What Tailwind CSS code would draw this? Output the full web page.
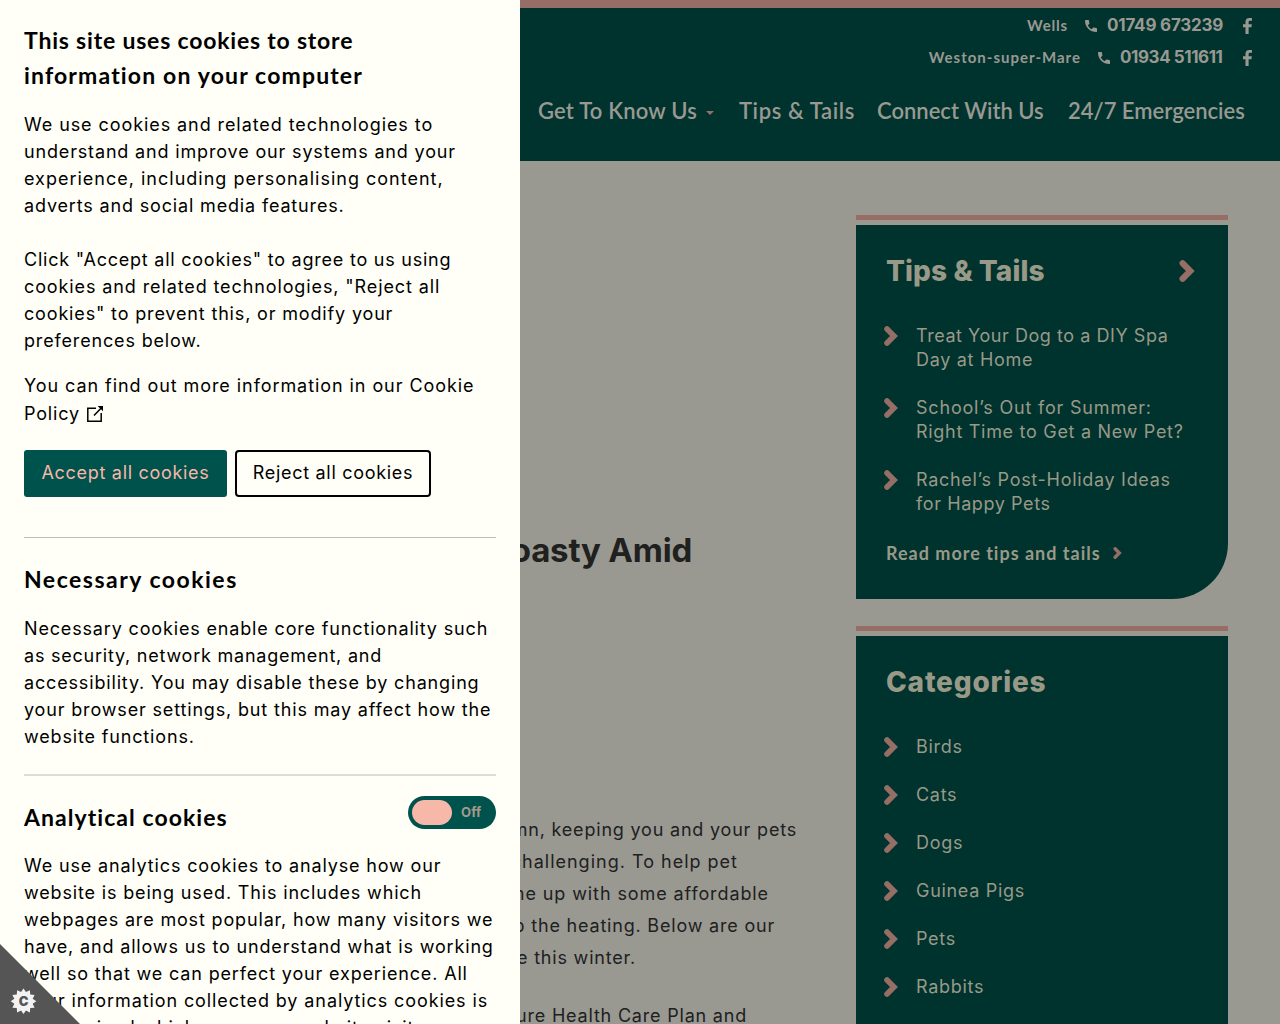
<!DOCTYPE html>
<html lang="en">
<head>
<meta charset="utf-8">
<title>Tips &amp; Tails</title>
<script src="https://cdn.jsdelivr.net/npm/@tailwindcss/browser@4"></script>
</head>
<body class="bg-[#999992]">
<svg class="hidden">
  <symbol id="chev" viewBox="0 0 14 20"><path d="M3 3L10 10L3 17" fill="none" stroke="#966e66" stroke-width="5.6" stroke-linecap="round" stroke-linejoin="miter"/></symbol>
  <symbol id="phone" viewBox="0 0 12 12"><path d="M0.6 0H3.3Q4 0 4 .7Q4 2 4.4 3.2Q4.5 3.7 4.2 4L2.7 5.3Q4 8 6.7 9.3L8 7.8Q8.3 7.5 8.8 7.6Q10 8 11.3 8Q12 8 12 8.7V11.4Q12 12 11.3 12Q6.7 12 3.3 8.7Q0 5.3 0 .7Q0 0 .6 0Z" fill="#999992"/></symbol>
  <symbol id="fb" viewBox="0 0 9 16"><path d="M2.5 16V9.3H0V6.3H2.5V4Q2.5 0 6.3 0H9V2.8H7Q5.6 2.8 5.6 4.2V6.3H8.8L8.4 9.3H5.6V16Z" fill="#999992"/></symbol>
</svg>
<div class="relative h-[1024px] w-[1280px] overflow-hidden font-['Inter',sans-serif] text-[18px]">
  <header class="flex h-[161px] flex-col items-end border-t-8 border-[#966e66] bg-[#00332e] pt-[2px] font-['Lato',sans-serif] font-bold text-[#999992]">
    <div class="flex h-8 items-center pr-7 text-[15px]">
      <span class="-mt-px tracking-[0.8px]">Wells</span>
      <svg class="ml-[17px] size-3"><use href="#phone"/></svg>
      <span class="ml-[10px] w-[117px] whitespace-nowrap font-['Inter',sans-serif] text-[17px] tracking-[-0.2px]">01749 673239</span>
      <svg class="ml-[19px] h-4 w-[9px]"><use href="#fb"/></svg>
    </div>
    <div class="flex h-8 items-center pr-7 text-[15px]">
      <span class="-mt-px tracking-[1px]">Weston-super-Mare</span>
      <svg class="ml-[17px] size-3"><use href="#phone"/></svg>
      <span class="ml-[10px] w-[104px] whitespace-nowrap font-['Inter',sans-serif] text-[17px] tracking-[-0.42px]">01934 511611</span>
      <svg class="ml-[19px] h-4 w-[9px]"><use href="#fb"/></svg>
    </div>
    <nav class="mt-[19px] flex h-[34px] w-[742px] items-center whitespace-nowrap text-[22px] font-semibold">
      <a class="w-[168px] tracking-[0.2px]">Get To Know Us</a>
      <svg class="mt-[5px] h-1 w-2" viewBox="0 0 8 4"><path d="M0 0H8L4 4Z" fill="#966e66"/></svg>
      <a class="ml-[25px] w-[138px] tracking-[0.6px]">Tips &amp; Tails</a>
      <a class="w-[191px]">Connect With Us</a>
      <a>24/7 Emergencies</a>
    </nav>
  </header>

  <div class="flex">
    <main class="flex w-[856px] flex-col items-start whitespace-nowrap text-[18px] leading-8 tracking-[0.8px] text-[#20201e]">
      <h1 class="mt-[364px] w-[692px] text-right text-[33px] leading-[50px] font-bold tracking-[-0.2px]">Toasty Amid</h1>
      <div class="mt-[239px] flex flex-col text-right">
        <p class="w-[797px]">autumn, keeping you and your pets</p>
        <p class="w-[738px] tracking-[1px]">challenging. To help pet</p>
        <p class="w-[769px] tracking-[0.9px]">come up with some affordable</p>
        <p class="w-[775px]">up the heating. Below are our</p>
        <p class="w-[636px]">active this winter.</p>
        <p class="mt-[26px] w-[747px]">Pure Health Care Plan and</p>
      </div>
    </main>

    <aside class="w-[372px] pt-[54px] leading-6 tracking-[0.7px] text-[#999988]">
      <div class="h-[5px] bg-[#966e66]"></div>
      <section class="mt-[5px] h-[374.400px] rounded-br-[56px] bg-[#00332e] pt-7">
        <div class="flex items-center justify-between pr-[33px] pl-[30px]">
          <h2 class="text-[28px] leading-9 font-extrabold tracking-[0.1px]">Tips &amp; Tails</h2>
          <svg class="h-[22px] w-4"><use href="#chev"/></svg>
        </div>
        <ul class="mt-[35px] flex flex-col gap-6 pl-7">
          <li class="flex gap-[18px]"><svg class="mt-[2px] h-5 w-[14px]"><use href="#chev"/></svg><span><span class="tracking-[0.55px]">Treat Your Dog to a DIY Spa</span><br>Day at Home</span></li>
          <li class="flex gap-[18px]"><svg class="mt-[2px] h-5 w-[14px]"><use href="#chev"/></svg><span><span class="tracking-[0.8px]">School’s Out for Summer:</span><br>Right Time to Get a New Pet?</span></li>
          <li class="flex gap-[18px]"><svg class="mt-[2px] h-5 w-[14px]"><use href="#chev"/></svg><span>Rachel’s Post-Holiday Ideas<br><span class="tracking-[0.6px]">for Happy Pets</span></span></li>
        </ul>
        <a class="mt-[25px] flex items-center pl-[30px] font-['Lato',sans-serif] text-[18px] font-bold tracking-[1px]"><span class="w-[227px]">Read more tips and tails</span><svg class="h-3 w-[9px]"><use href="#chev"/></svg></a>
      </section>
      <div class="mt-[27px] h-[5px] bg-[#966e66]"></div>
      <section class="mt-[5px] h-[500px] bg-[#00332e] pt-7">
        <h2 class="pl-[30px] text-[28px] leading-9 font-extrabold tracking-[0.8px]">Categories</h2>
        <ul class="mt-[35px] flex flex-col gap-6 pl-7">
          <li class="flex gap-[18px]"><svg class="mt-[2px] h-5 w-[14px]"><use href="#chev"/></svg>Birds</li>
          <li class="flex gap-[18px]"><svg class="mt-[2px] h-5 w-[14px]"><use href="#chev"/></svg>Cats</li>
          <li class="flex gap-[18px]"><svg class="mt-[2px] h-5 w-[14px]"><use href="#chev"/></svg>Dogs</li>
          <li class="flex gap-[18px]"><svg class="mt-[2px] h-5 w-[14px]"><use href="#chev"/></svg>Guinea Pigs</li>
          <li class="flex gap-[18px]"><svg class="mt-[2px] h-5 w-[14px]"><use href="#chev"/></svg>Pets</li>
          <li class="flex gap-[18px]"><svg class="mt-[2px] h-5 w-[14px]"><use href="#chev"/></svg>Rabbits</li>
        </ul>
      </section>
    </aside>
  </div>

  <!-- Cookie consent panel -->
  <div class="absolute top-0 left-0 h-[1024px] w-[520px] overflow-hidden bg-[#fffff7] px-6 pt-[23px] leading-[27px] tracking-[0.84px] whitespace-nowrap text-black">
    <h2 class="font-['Lato',sans-serif] text-[23px] leading-[35px] font-bold tracking-[0.8px]">This site uses cookies to store<br><span class="tracking-[1.15px]">information on your computer</span></h2>
    <p class="mt-[18px]"><span class="tracking-[0.92px]">We use cookies and related technologies to</span><br>understand and improve our systems and your<br><span class="tracking-[1px]">experience, including personalising content,</span><br>adverts and social media features.</p>
    <p class="mt-[27px]"><span class="tracking-[0.77px]">Click "Accept all cookies" to agree to us using</span><br><span class="tracking-[0.89px]">cookies and related technologies, "Reject all</span><br>cookies" to prevent this, or modify your<br>preferences below.</p>
    <p class="mt-[18px] tracking-[0.93px]">You can find out more information in our Cookie</p>
    <p class="mt-px flex items-center">Policy
      <svg class="mt-px ml-[6px] size-[18px]" viewBox="0 0 18 18" fill="none" stroke="#000" stroke-width="1.5"><path d="M10 3.2H1.8V16.2H15.2V8M8 10.5L16 2.3"/><path d="M11.7 1H17V6.300Z" fill="#000" stroke="none"/></svg>
    </p>
    <div class="mt-[23px] flex gap-2 tracking-[0.7px]">
      <button class="h-[47px] w-[203px] rounded-[3px] bg-[#00524c] pb-[2px] text-[#f7b7a9]">Accept all cookies</button>
      <button class="h-[47px] w-[196px] rounded-[4px] border-2 border-black pb-[2px]">Reject all cookies</button>
    </div>
    <hr class="mt-10 border-[#bfbfb9]">
    <h3 class="mt-[23px] font-['Lato',sans-serif] text-[23px] leading-9 font-bold tracking-[1.5px]">Necessary cookies</h3>
    <p class="mt-[18px]">Necessary cookies enable core functionality such<br><span class="tracking-[0.77px]">as security, network management, and</span><br>accessibility. You may disable these by changing<br>your browser settings, but this may affect how the<br>website functions.</p>
    <hr class="mt-6 border-t-2 border-[#ddddd6]">
    <div class="mt-5 flex items-start justify-between">
      <h3 class="mt-[3px] mb-px font-['Lato',sans-serif] text-[23px] leading-9 font-bold tracking-[1.05px]">Analytical cookies</h3>
      <div class="flex h-[33px] w-[88px] items-center rounded-full bg-[#00524c] p-1">
        <span class="h-[25px] w-10 rounded-full bg-[#f7b7a9]"></span>
        <span class="ml-[9px] text-[13px] font-bold tracking-[0.2px] text-[#a69a8c]">Off</span>
      </div>
    </div>
    <p class="mt-4">We use analytics cookies to analyse how our<br>website is being used. This includes which<br>webpages are most popular, how many visitors we<br>have, and allows us to understand what is working<br>well so that we can perfect your experience. All<br><span class="tracking-[0.9px]">your information collected by analytics cookies is</span><br>anonymised which means no website visitor can</p>
  </div>

  <svg class="absolute bottom-0 left-0 size-20" viewBox="0 0 80 80">
    <path d="M0 0L80 80H0Z" fill="#555"/>
    <path id="badge" fill="#f2f2f2"/>
    <text x="23.500" y="62.200" text-anchor="middle" class="font-['Inter',sans-serif] text-[13px] font-black" fill="#555">C</text>
  </svg>
</div>
<script>
// Twelve-point badge outline
const pts = [];
for (let i = 0; i < 24; i++) {
  const r = i % 2 ? 9.5 : 12.8, a = i * Math.PI / 12;
  pts.push((23.5 + r * Math.cos(a)).toFixed(2) + ' ' + (57.3 + r * Math.sin(a)).toFixed(2));
}
document.getElementById('badge').setAttribute('d', 'M' + pts.join('L') + 'Z');
</script>
</body>
</html>
